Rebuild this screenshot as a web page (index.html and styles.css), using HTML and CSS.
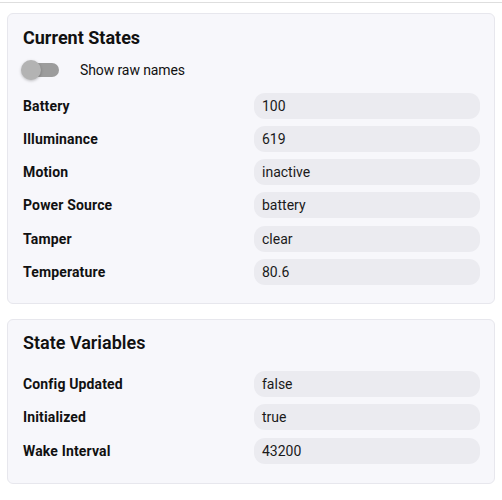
FILE: index.html
```html
<!DOCTYPE html>
<html>
<head>
<meta charset="utf-8">
<link rel="stylesheet" href="styles.css">
</head>
<body>
<div class="topbar"></div>
<div class="page">
  <section class="card">
    <h2 class="title">Current States</h2>
    <div class="toggle-row">
      <span class="switch"><span class="track"></span><span class="thumb"></span></span>
      <span class="toggle-label">Show raw names</span>
    </div>
    <div class="rows">
      <div class="label">Battery</div><div class="value">100</div>
      <div class="label">Illuminance</div><div class="value">619</div>
      <div class="label">Motion</div><div class="value">inactive</div>
      <div class="label">Power Source</div><div class="value">battery</div>
      <div class="label">Tamper</div><div class="value">clear</div>
      <div class="label">Temperature</div><div class="value">80.6</div>
    </div>
  </section>
  <section class="card card-vars">
    <h2 class="title title-vars">State Variables</h2>
    <div class="rows rows-vars">
      <div class="label">Config Updated</div><div class="value">false</div>
      <div class="label">Initialized</div><div class="value">true</div>
      <div class="label">Wake Interval</div><div class="value">43200</div>
    </div>
  </section>
</div>
</body>
</html>
```

FILE: styles.css
```css
* { box-sizing: border-box; }
html, body { margin: 0; padding: 0; background: #ffffff; }
body {
  font-family: Roboto, "Liberation Sans", sans-serif;
  color: #111111;
  width: 502px;
}
.topbar {
  height: 3px;
  border-bottom: 1px solid #dedede;
}
.page {
  padding: 10px 7px 0 7px;
  display: flex;
  flex-direction: column;
  gap: 15px;
}
.card {
  background: #f7f7fb;
  border: 1px solid #e7e7ed;
  border-radius: 6px;
  padding: 12px 14px 18px 15px;
}
.card-vars {
  padding-top: 11.5px;
  padding-bottom: 19px;
}
.title {
  margin: 0;
  font-size: 18px;
  line-height: 24px;
  font-weight: 700;
  color: #111111;
}
.title-vars { font-weight: 600; }
.toggle-row {
  display: flex;
  align-items: center;
  height: 20px;
  margin-top: 10px;
}
.switch {
  position: relative;
  width: 38px;
  height: 20px;
  margin-left: -2px;
  margin-right: 21px;
}
.track {
  position: absolute;
  left: 1px;
  top: 3px;
  width: 37px;
  height: 14px;
  border-radius: 7px;
  background: #9c9c9c;
}
.thumb {
  position: absolute;
  left: 0;
  top: 0;
  width: 20px;
  height: 20px;
  border-radius: 50%;
  background: #b3b3b3;
  box-shadow: 0 1px 3px rgba(0,0,0,0.25);
}
.toggle-label {
  font-size: 14px;
  letter-spacing: -0.1px;
  color: #111111;
}
.rows {
  display: grid;
  grid-template-columns: 231px 1fr;
  row-gap: 7.3px;
  margin-top: 12.5px;
}
.rows-vars { margin-top: 15.5px; }
.label {
  font-size: 14px;
  font-weight: 700;
  letter-spacing: 0.15px;
  display: flex;
  align-items: center;
  height: 26px;
  color: #111111;
}
.value {
  height: 26px;
  border-radius: 11px;
  background: #ebebf0;
  font-size: 14px;
  display: flex;
  align-items: center;
  padding-left: 8px;
  color: #1a1a1a;
}
```
